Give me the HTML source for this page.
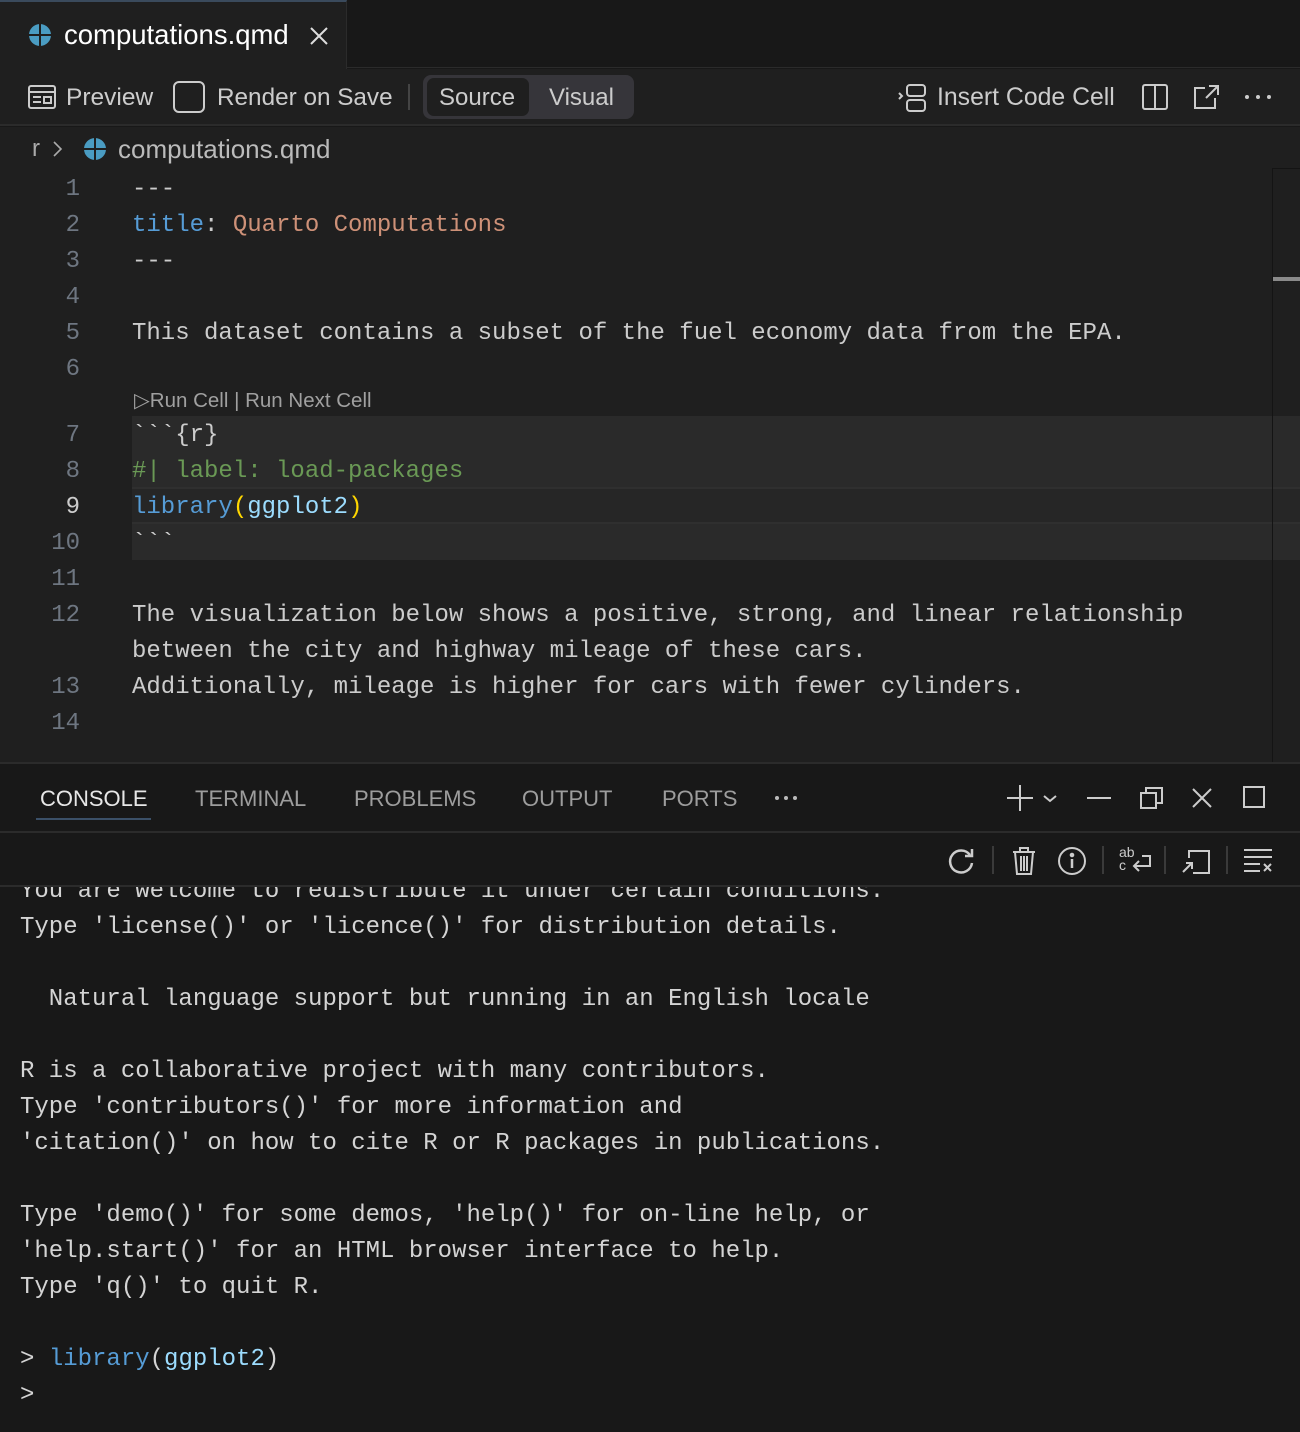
<!DOCTYPE html>
<html><head><meta charset="utf-8"><style>
*{margin:0;padding:0;box-sizing:border-box}
body{width:1300px;height:1432px;background:#181818;position:relative;overflow:hidden;font-family:"Liberation Sans",sans-serif;color:#ccc}
.a{position:absolute;white-space:pre}
.m{font-family:"Liberation Mono",monospace;font-size:24px;line-height:36px}
.ui{font-size:24px;line-height:30px}
.ln{position:absolute;width:80px;text-align:right;left:0;color:#6e7681;font-family:"Liberation Mono",monospace;font-size:24px;line-height:36px}
svg{position:absolute}
</style></head><body>
<!-- tab bar -->
<div class="a" style="left:0;top:0;width:1300px;height:68px;background:#181818;border-bottom:1px solid #2b2b2b"></div>
<div class="a" style="left:0;top:0;width:347px;height:69px;background:#1f1f1f;border-top:2px solid #3a4a5c;border-right:1px solid #2b2b2b"></div>
<svg style="left:29px;top:24px" width="22" height="22" viewBox="0 0 22 22"><circle cx="11" cy="11" r="11" fill="#4a9cc2"/><path d="M11 0v22M0 11h22" stroke="#1f1f1f" stroke-width="2"/></svg>
<div class="a ui" style="left:64px;top:20px;color:#fff;font-size:27.5px">computations.qmd</div>
<svg style="left:309px;top:26px" width="20" height="20" viewBox="0 0 20 20"><path d="M2 2l16 16M18 2L2 18" stroke="#ddd" stroke-width="2"/></svg>
<!-- toolbar -->
<div class="a" style="left:0;top:69px;width:1300px;height:57px;background:#1f1f1f;border-bottom:2px solid #2b2b2b"></div>
<svg style="left:28px;top:85px" width="28" height="24" viewBox="0 0 28 24" fill="none" stroke="#ccc" stroke-width="2"><rect x="1" y="1" width="26" height="22" rx="2"/><path d="M1 7h26M5 12h8M5 17h8"/><rect x="16" y="12" width="7" height="6"/></svg>
<div class="a ui" style="left:66px;top:83px;font-size:24.5px">Preview</div>
<div class="a" style="left:173px;top:81px;width:32px;height:32px;border:2px solid #ccc;border-radius:6px"></div>
<div class="a ui" style="left:217px;top:83px;font-size:24.3px">Render on Save</div>
<div class="a" style="left:408px;top:84px;width:2px;height:26px;background:#444"></div>
<div class="a" style="left:423px;top:75px;width:211px;height:44px;background:#36353a;border-radius:8px"></div>
<div class="a" style="left:427px;top:78px;width:102px;height:38px;background:#1f1f1f;border-radius:7px"></div>
<div class="a ui" style="left:439px;top:83px">Source</div>
<div class="a ui" style="left:549px;top:83px">Visual</div>
<svg style="left:897px;top:83px" width="32" height="30" viewBox="0 0 32 30" fill="none" stroke="#ccc" stroke-width="2"><path d="M2 10l3 3-3 3"/><rect x="10" y="2" width="18" height="11" rx="3"/><rect x="10" y="17" width="18" height="11" rx="3"/></svg>
<div class="a ui" style="left:937px;top:83px;font-size:24.8px">Insert Code Cell</div>
<svg style="left:1142px;top:84px" width="26" height="26" viewBox="0 0 26 26" fill="none" stroke="#ccc" stroke-width="2"><rect x="1" y="1" width="24" height="24" rx="2"/><path d="M13 1v24"/></svg>
<svg style="left:1193px;top:84px" width="28" height="26" viewBox="0 0 28 26" fill="none" stroke="#ccc" stroke-width="2"><path d="M12 4H2v20h20V14M16 2h9v9M25 2L13 14"/></svg>
<svg style="left:1244px;top:94px" width="28" height="6" viewBox="0 0 28 6" fill="#ccc"><circle cx="3" cy="3" r="2"/><circle cx="14" cy="3" r="2"/><circle cx="25" cy="3" r="2"/></svg>
<!-- editor -->
<div class="a" style="left:0;top:127px;width:1300px;height:636px;background:#1f1f1f"></div>
<div class="a ui" style="left:32px;top:134px;color:#aaa">r</div>
<svg style="left:52px;top:140px" width="12" height="18" viewBox="0 0 12 18"><path d="M2 2l7 7-7 7" stroke="#aaa" stroke-width="1.6" fill="none"/></svg>
<svg style="left:84px;top:138px" width="22" height="22" viewBox="0 0 22 22"><circle cx="11" cy="11" r="11" fill="#4a9cc2"/><path d="M11 0v22M0 11h22" stroke="#1f1f1f" stroke-width="2"/></svg>
<div class="a ui" style="left:118px;top:134px;color:#bbb;font-size:26px">computations.qmd</div>

<div class="a" style="left:132px;top:416px;width:1168px;height:144px;background:#2a2a2a"></div>
<div class="a" style="left:132px;top:487px;width:1168px;height:37px;border-top:2px solid #2f2f2f;border-bottom:2px solid #2f2f2f;background:#262626"></div>
<div class="a" style="left:1272px;top:168px;width:1px;height:595px;background:#141414"></div>
<div class="a" style="left:1273px;top:168px;width:27px;height:1px;background:#141414"></div>
<div class="a" style="left:1273px;top:277px;width:27px;height:4px;background:#8a8a8a"></div>

<div class="ln" style="top:172px">1</div>
<div class="ln" style="top:208px">2</div>
<div class="ln" style="top:244px">3</div>
<div class="ln" style="top:280px">4</div>
<div class="ln" style="top:316px">5</div>
<div class="ln" style="top:352px">6</div>
<div class="ln" style="top:418px">7</div>
<div class="ln" style="top:454px">8</div>
<div class="ln" style="top:490px;color:#ccc">9</div>
<div class="ln" style="top:526px">10</div>
<div class="ln" style="top:562px">11</div>
<div class="ln" style="top:598px">12</div>
<div class="ln" style="top:670px">13</div>
<div class="ln" style="top:706px">14</div>

<div class="a m" style="left:132px;top:172px;color:#ccc">---</div>
<div class="a m" style="left:132px;top:208px"><span style="color:#569cd6">title</span><span style="color:#ccc">: </span><span style="color:#ce9178">Quarto Computations</span></div>
<div class="a m" style="left:132px;top:244px;color:#ccc">---</div>
<div class="a m" style="left:132px;top:316px;color:#ccc">This dataset contains a subset of the fuel economy data from the EPA.</div>
<div class="a" style="left:134px;top:389px;font-size:20.5px;line-height:24px;color:#a0a0a0">&#9655;Run Cell | Run Next Cell</div>
<div class="a m" style="left:132px;top:418px;color:#ccc">&#96;&#96;&#96;{r}</div>
<div class="a m" style="left:132px;top:454px;color:#6a9955">#| label: load-packages</div>
<div class="a m" style="left:132px;top:490px"><span style="color:#569cd6">library</span><span style="color:#ffd700">(</span><span style="color:#9cdcfe">ggplot2</span><span style="color:#ffd700">)</span></div>
<div class="a m" style="left:132px;top:526px;color:#ccc">&#96;&#96;&#96;</div>
<div class="a m" style="left:132px;top:598px;color:#ccc">The visualization below shows a positive, strong, and linear relationship
between the city and highway mileage of these cars.
Additionally, mileage is higher for cars with fewer cylinders.</div>

<!-- panel -->
<div class="a" style="left:0;top:762px;width:1300px;height:2px;background:#2b2b2b"></div>
<div class="a" style="left:40px;top:785px;font-size:22px;line-height:28px;color:#e7e7e7">CONSOLE</div>
<div class="a" style="left:195px;top:785px;font-size:22px;line-height:28px;color:#9d9d9d">TERMINAL</div>
<div class="a" style="left:354px;top:785px;font-size:22px;line-height:28px;color:#9d9d9d">PROBLEMS</div>
<div class="a" style="left:522px;top:785px;font-size:22px;line-height:28px;color:#9d9d9d">OUTPUT</div>
<div class="a" style="left:662px;top:785px;font-size:22px;line-height:28px;color:#9d9d9d">PORTS</div>
<svg style="left:774px;top:795px" width="24" height="6" viewBox="0 0 24 6" fill="#bbb"><circle cx="3" cy="3" r="2"/><circle cx="12" cy="3" r="2"/><circle cx="21" cy="3" r="2"/></svg>
<div class="a" style="left:36px;top:818px;width:115px;height:2px;background:#3b5068"></div>
<div class="a" style="left:0;top:831px;width:1300px;height:2px;background:#2b2b2b"></div>
<svg style="left:1005px;top:784px" width="60" height="28" viewBox="0 0 60 28" fill="none" stroke="#ccc" stroke-width="2"><path d="M15 1v26M2 14h26M39 12l6 5 6-5"/></svg>
<svg style="left:1087px;top:796px" width="24" height="4"><path d="M0 2h24" stroke="#ccc" stroke-width="2"/></svg>
<svg style="left:1140px;top:786px" width="24" height="24" viewBox="0 0 24 24" fill="none" stroke="#ccc" stroke-width="2"><rect x="1" y="7" width="15" height="15"/><path d="M6 7V2h16v15h-6"/></svg>
<svg style="left:1192px;top:788px" width="20" height="20" viewBox="0 0 20 20"><path d="M1 1l18 18M19 1L1 19" stroke="#ccc" stroke-width="2"/></svg>
<svg style="left:1243px;top:786px" width="22" height="22" viewBox="0 0 22 22"><rect x="1" y="1" width="20" height="20" fill="none" stroke="#ccc" stroke-width="2"/></svg>
<!-- console toolbar -->
<svg style="left:946px;top:846px" width="30" height="30" viewBox="0 0 30 30" fill="none" stroke="#ccc" stroke-width="2.5"><path d="M24 9A11 11 0 1 0 26 17"/><path d="M26 3v7h-7"/></svg>
<div class="a" style="left:992px;top:846px;width:2px;height:28px;background:#3a3a3a"></div>
<svg style="left:1012px;top:846px" width="24" height="30" viewBox="0 0 24 30" fill="none" stroke="#ccc" stroke-width="2"><path d="M1 6h22M8 6V2h8v4M3 6l2 22h14l2-22M9 10v15M12 10v15M15 10v15"/></svg>
<svg style="left:1057px;top:846px" width="30" height="30" viewBox="0 0 30 30" fill="none" stroke="#ccc" stroke-width="2"><circle cx="15" cy="15" r="13"/><path d="M15 13v9" stroke-width="2.5"/><circle cx="15" cy="9" r="1.3" fill="#ccc"/></svg>
<div class="a" style="left:1102px;top:846px;width:2px;height:28px;background:#3a3a3a"></div>
<div class="a" style="left:1119px;top:846px;font-size:14px;line-height:13px;color:#ccc">ab<br>c</div>
<svg style="left:1128px;top:852px" width="24" height="22" viewBox="0 0 24 22" fill="none" stroke="#ccc" stroke-width="2"><path d="M14 4h8v10H6M11 9l-5 5 5 5"/></svg>
<div class="a" style="left:1164px;top:846px;width:2px;height:28px;background:#3a3a3a"></div>
<svg style="left:1181px;top:848px" width="32" height="26" viewBox="0 0 32 26" fill="none" stroke="#ccc" stroke-width="2"><path d="M8 10V3h20v22H12"/><path d="M2 24l8-8M5 15h6v6"/></svg>
<div class="a" style="left:1226px;top:846px;width:2px;height:28px;background:#3a3a3a"></div>
<svg style="left:1243px;top:848px" width="30" height="24" viewBox="0 0 30 24" fill="none" stroke="#ccc" stroke-width="2"><path d="M1 2h28M1 9h28M1 16h16M1 23h16M21 16l7 7M28 16l-7 7"/></svg>
<div class="a" style="left:0;top:885px;width:1300px;height:2px;background:#2b2b2b"></div>
<!-- console text -->
<div class="a" style="left:0;top:887px;width:1300px;height:545px;overflow:hidden">
<div class="a m" style="left:20px;top:-13px;color:#d4d4d4">You are welcome to redistribute it under certain conditions.
Type 'license()' or 'licence()' for distribution details.

  Natural language support but running in an English locale

R is a collaborative project with many contributors.
Type 'contributors()' for more information and
'citation()' on how to cite R or R packages in publications.

Type 'demo()' for some demos, 'help()' for on-line help, or
'help.start()' for an HTML browser interface to help.
Type 'q()' to quit R.

&gt; <span style="color:#569cd6">library</span>(<span style="color:#9cdcfe">ggplot2</span>)
&gt;</div>
</div>
</body></html>
